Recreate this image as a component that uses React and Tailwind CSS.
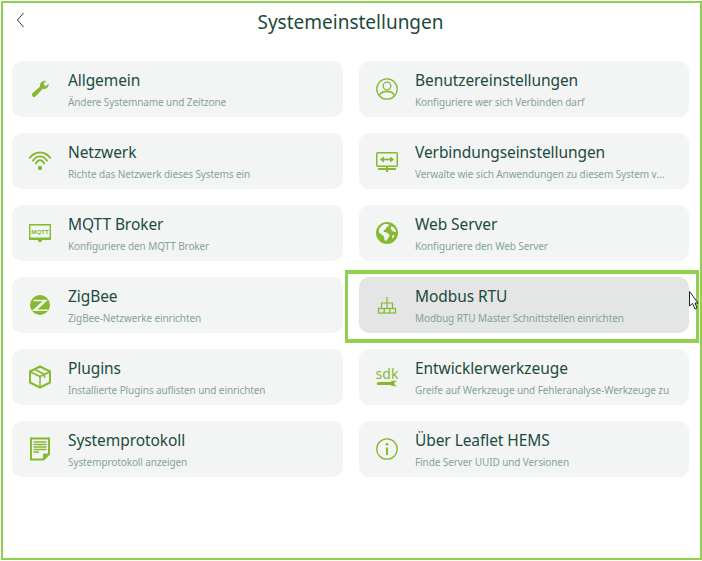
import React from 'react';

const GREEN = "#85b92f";

const WrenchIcon = () => (
  <svg viewBox="0 0 24 24" className="w-6 h-6" fill={GREEN}>
    <path d="M4.200 16.500 L12 9.600 C11.600 7 13 4.600 15.500 4 C16.500 3.800 17.300 3.800 18 4 L15.600 6.400 L16.200 8.400 L18.200 9 L20.600 6.600 C20.900 8 20.400 10 19 11 C17.600 12 16 12.100 14.800 11.700 L7.500 19.500 C6.700 20.300 5.600 20.300 4.700 19.500 C3.800 18.700 3.500 17.300 4.200 16.500 Z" />
  </svg>
);

const WifiIcon = () => (
  <svg viewBox="0 0 24 24" className="w-6 h-6" fill="none" stroke={GREEN} strokeWidth="1.800">
    <path d="M1.200 9.500 C7 1.500 17 1.500 22.800 9.500" />
    <path d="M4.500 12.300 C8.800 5.800 15.200 5.800 19.500 12.300" />
    <path d="M7.500 15.200 C10 9.800 14 9.800 16.500 15.200" />
    <circle cx="12" cy="19" r="2.200" fill={GREEN} stroke="none" />
  </svg>
);

const MqttIcon = () => (
  <svg viewBox="0 0 24 24" className="w-6 h-6">
    <path d="M1.700 3.700 H22.300 V18.300 H14.500 L12 20.800 L9.500 18.300 H1.700 Z" fill="none" stroke={GREEN} strokeWidth="1.400" />
    <path d="M2 16.500 H22 V18.500 H14.500 L12 21 L9.500 18.500 H2 Z" fill={GREEN} />
    <text x="12" y="12.500" textAnchor="middle" fontSize="6.200" fontWeight="700" fill={GREEN} fontFamily="'Liberation Sans', sans-serif">MQTT</text>
  </svg>
);

const ZigbeeIcon = () => (
  <svg viewBox="0 0 24 24" className="w-6 h-6">
    <circle cx="12" cy="12" r="10" fill={GREEN} />
    <path d="M5.500 6.800 H20 L9.500 16.400 H20.500 L19.200 18 H3.800 L14.500 8.300 H5.500 Z" fill="#f3f5f5" />
  </svg>
);

const PluginsIcon = () => (
  <svg viewBox="0 0 24 24" className="w-6 h-6" fill="none" stroke={GREEN} strokeWidth="2" strokeLinejoin="round">
    <path d="M12 1.500 L22 6.500 V17.500 L12 22.500 L2 17.500 V6.500 Z" />
    <path d="M2.500 7 L12 11.500 L21.500 7" strokeWidth="1.500" />
    <path d="M12 11.500 V22" strokeWidth="1.500" />
    <path d="M7 4.500 L16.500 9.500 V13" strokeWidth="1.500" />
  </svg>
);

const LogIcon = () => (
  <svg viewBox="0 0 24 24" className="w-6 h-6" fill="none" stroke={GREEN}>
    <path d="M3 1.500 H21 V17 L15.500 22.500 H3 Z" strokeWidth="2" />
    <path d="M21 17 H15.500 V22.500 Z" fill={GREEN} strokeWidth="1" />
    <path d="M5.500 5 H18.500 M5.500 7.500 H18.500 M5.500 10 H18.500 M5.500 12.500 H18.500 M5.500 15 H11" strokeWidth="1.300" />
  </svg>
);

const UserIcon = () => (
  <svg viewBox="0 0 24 24" className="w-6 h-6" fill="none" stroke={GREEN} strokeWidth="1.300">
    <circle cx="12" cy="12" r="10.200" />
    <circle cx="12" cy="9" r="3.800" />
    <path d="M4.500 18.500 C5.500 15.500 8.500 14.500 12 14.500 C15.500 14.500 18.500 15.500 19.500 18.500" />
  </svg>
);

const ConnectionIcon = () => (
  <svg viewBox="0 0 24 24" className="w-6 h-6" fill="none" stroke={GREEN} strokeWidth="1.500">
    <rect x="1.750" y="3.750" width="20.500" height="13.500" rx="1" />
    <path d="M7 10.500 H17" strokeWidth="1.800" />
    <path d="M9 7.500 L4.800 10.500 L9 13.500 Z M15 7.500 L19.200 10.500 L15 13.500 Z" fill={GREEN} stroke="none" />
    <path d="M12 18 V23 M3 20 H21" strokeWidth="2" />
  </svg>
);

const GlobeIcon = () => (
  <svg viewBox="0 0 24 24" className="w-6 h-6">
    <circle cx="12" cy="12" r="11" fill={GREEN} />
    <path d="M9 3.200 C11 2.800 13 3 14 3.500 L13.500 5.500 L11.500 6 L11 8 L8.500 9.500 L9 11 L11.500 11.500 L14 13 L14.500 15 L12.500 18 L11 20 L9.500 19 L9 15.500 L6.500 13.500 L4 11.500 L3.800 9 C5 6 7 4 9 3.200 Z" fill="#f3f5f5" />
    <path d="M16.500 5 L20 7.500 L21 11 L19 11 L17 9.500 L15.500 7.500 Z M18 14 L19.500 14.500 L18 17.500 L16.800 16 Z" fill="#f3f5f5" />
  </svg>
);

const ModbusIcon = () => (
  <svg viewBox="0 0 24 24" className="w-6 h-6" fill="none" stroke={GREEN} strokeWidth="1.200">
    <path d="M12 4 V15 M6.500 15 V10 H17.500 V15" />
    <rect x="3.500" y="15.500" width="17" height="4.500" />
    <path d="M9.200 15.500 V20 M14.800 15.500 V20" />
  </svg>
);

const SdkIcon = () => (
  <svg viewBox="0 0 24 24" className="w-6 h-6">
    <text x="12" y="14" textAnchor="middle" fontSize="14" fill={GREEN} fontFamily="'Noto Sans', sans-serif">sdk</text>
    <path d="M3 17 H15.500 C16.200 16.200 17.500 15.800 19 15.800 L22 15.800 L19.500 17.500 V19.500 L22 21.200 L19 21.200 C17.500 21.200 16.200 20.800 15.500 20 H3 C1.500 20 1.500 17 3 17 Z" fill={GREEN} />
  </svg>
);

const InfoIcon = () => (
  <svg viewBox="0 0 24 24" className="w-6 h-6" fill="none" stroke={GREEN} strokeWidth="1.300">
    <circle cx="12" cy="12" r="10.200" />
    <path d="M12 10.500 V18" strokeWidth="2" />
    <circle cx="12" cy="7.200" r="1.300" fill={GREEN} stroke="none" />
  </svg>
);

const ITEMS = [
  { title: "Allgemein", sub: "Ändere Systemname und Zeitzone", icon: <WrenchIcon /> },
  { title: "Benutzereinstellungen", sub: "Konfiguriere wer sich Verbinden darf", icon: <UserIcon /> },
  { title: "Netzwerk", sub: "Richte das Netzwerk dieses Systems ein", icon: <WifiIcon /> },
  { title: "Verbindungseinstellungen", sub: "Verwalte wie sich Anwendungen zu diesem System verbinden dürfen", icon: <ConnectionIcon /> },
  { title: "MQTT Broker", sub: "Konfiguriere den MQTT Broker", icon: <MqttIcon /> },
  { title: "Web Server", sub: "Konfiguriere den Web Server", icon: <GlobeIcon /> },
  { title: "ZigBee", sub: "ZigBee-Netzwerke einrichten", icon: <ZigbeeIcon /> },
  { title: "Modbus RTU", sub: "Modbug RTU Master Schnittstellen einrichten", icon: <ModbusIcon />, active: true },
  { title: "Plugins", sub: "Installierte Plugins auflisten und einrichten", icon: <PluginsIcon /> },
  { title: "Entwicklerwerkzeuge", sub: "Greife auf Werkzeuge und Fehleranalyse-Werkzeuge zu", icon: <SdkIcon /> },
  { title: "Systemprotokoll", sub: "Systemprotokoll anzeigen", icon: <LogIcon /> },
  { title: "Über Leaflet HEMS", sub: "Finde Server UUID und Versionen", icon: <InfoIcon /> },
];

function SettingsCard({ title, sub, icon, active }) {
  return (
    <div className="relative h-14">
      {active && (
        <div className="absolute left-[-14px] right-[-10px] top-[-7px] bottom-[-10px] border-x-[3px] border-y-[4px] border-[#8fd14f]"></div>
      )}
      <div className={`relative flex h-14 items-center gap-4 rounded-[10px] pl-4 ${active ? "bg-[#e4e5e5]" : "bg-[#f3f5f5]"}`}>
        <div className="w-6 h-6 shrink-0">{icon}</div>
        <div className="min-w-0 flex-1 self-start pt-[9px] pr-5">
          <div className="truncate text-[15.5px] leading-5 tracking-[-0.08px] text-[#1d4a3c]">{title}</div>
          <div className="mt-[2px] truncate text-[10px] leading-5 tracking-[-0.1px] text-[#86a298]">{sub}</div>
        </div>
      </div>
    </div>
  );
}

export default function App() {
  return (
    <div className="h-[561px] w-[702px] overflow-hidden bg-white pl-px pt-px font-['Noto_Sans',sans-serif]">
      <div className="relative h-[559px] w-[701px] border-2 border-[#8fd14f] pl-[9px]">
        <div className="relative flex h-[58px] items-start justify-center">
          <svg viewBox="0 0 10 16" className="absolute left-[4px] top-[9px] h-4 w-[10px]" fill="none" stroke="#1d4a3c" strokeWidth="1">
            <path d="M7.500 1 L1.500 8 L7.500 15" />
          </svg>
          <h1 className="mr-[11px] mt-[5px] text-[19px] leading-7 text-[#1d4a3c]">Systemeinstellungen</h1>
        </div>
        <div className="grid grid-cols-[331px_330px] gap-4">
          {ITEMS.map((item) => (
            <SettingsCard key={item.title} {...item} />
          ))}
        </div>
        {/* mouse cursor */}
        <svg viewBox="0 0 10 20" className="absolute left-[686px] top-[288px] h-5 w-[10px]" fill="#ffffff" stroke="#222222" strokeWidth="1">
          <path d="M0.500 0.500 V15 L3.500 12.500 L6 18 L8 17 L6 12 H9 Z" />
        </svg>
      </div>
    </div>
  );
}
